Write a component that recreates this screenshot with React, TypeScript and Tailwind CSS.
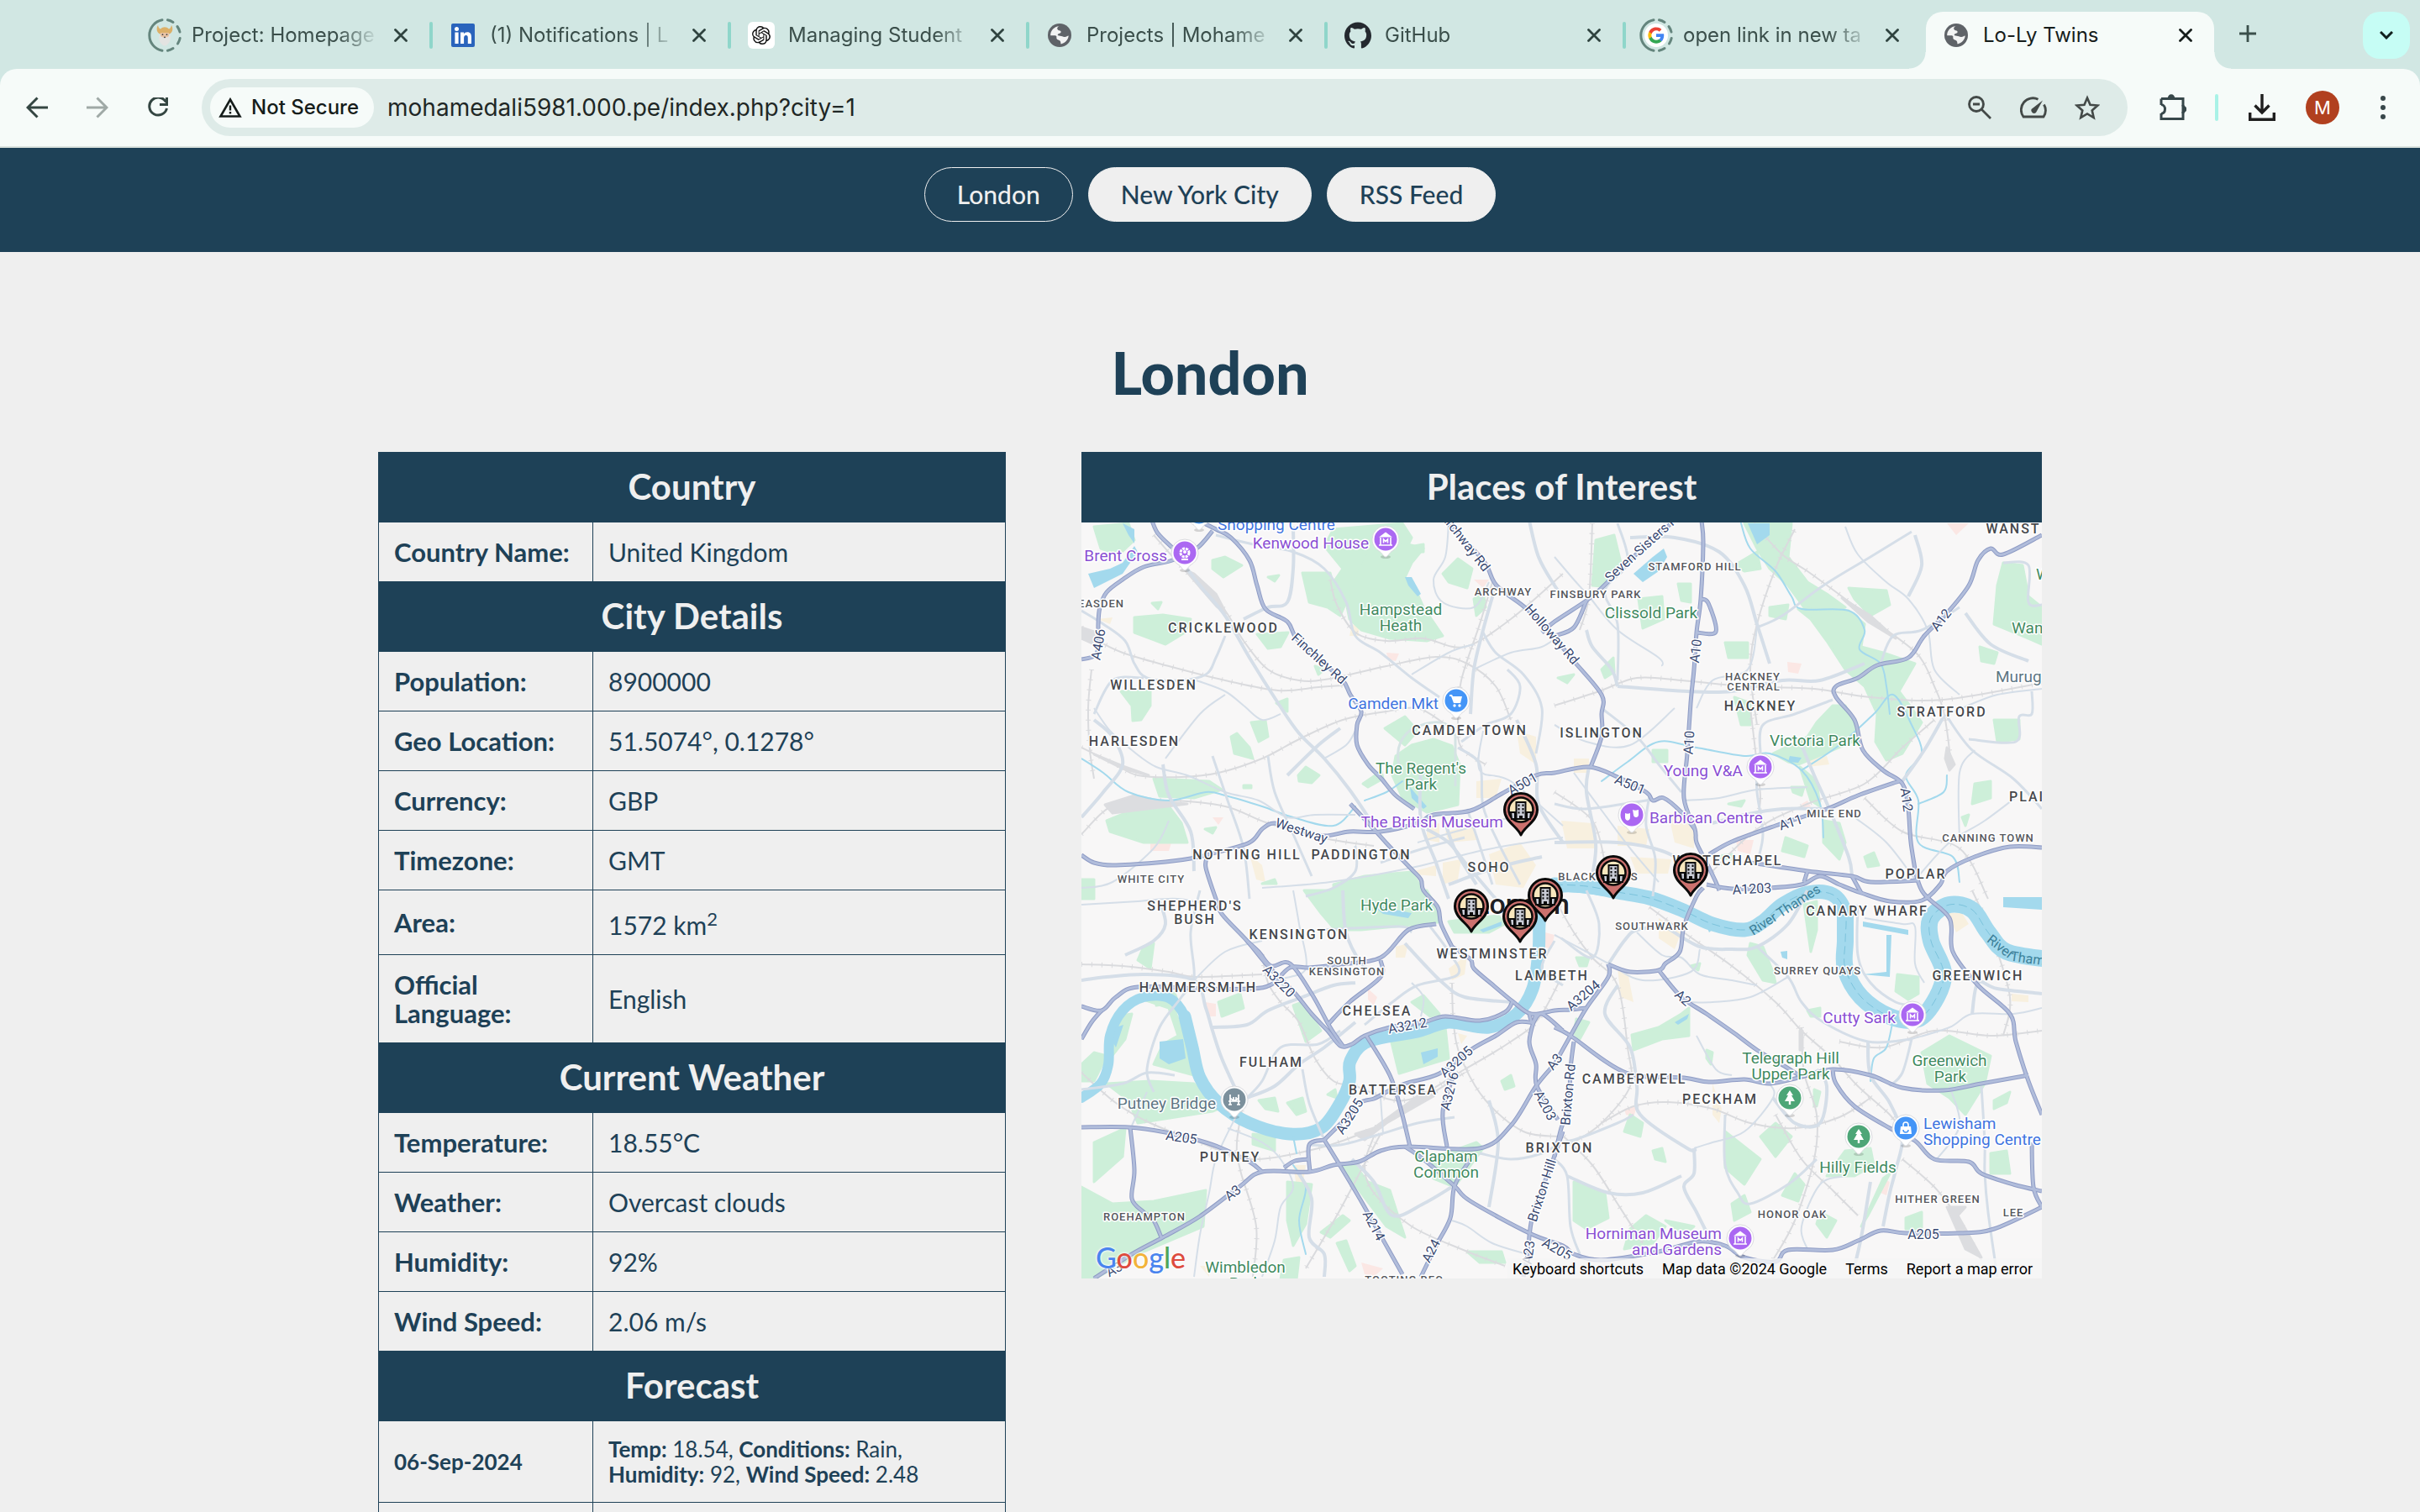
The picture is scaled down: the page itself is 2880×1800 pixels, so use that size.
import React from 'react'

/* ------------------------------------------------------------------ */
/* Browser chrome                                                      */
/* ------------------------------------------------------------------ */

function Globe() {
  return (
    <svg viewBox="0 0 28 28" className="size-7">
      <circle cx="14" cy="14" r="14" fill="#5f6368" />
      <path
        d="M13.500 3.200C11 4 10.600 6.300 12 7.600c1.300 1.200 3.800.7 3.600 2.600-.1 1.800-3.200 1.500-3.800 2.900-.5 1.200.9 1.700 2.800 1.700 2.200 0 3.300 1.400 5.600 1.200 2.200-.2 3.200-1.700 4.500-1.600-.3 4.700-3.900 8.600-9 10-.7-1.300 0-2.400-1.100-3.700-.9-1.100-3.400-1.100-4.100-2.700-.6-1.400.5-2.500-.6-3.300-1.600-1-4.600-.2-6.700-.4C2.900 8.600 7.400 3.600 13.500 3.200Z"
        fill="#fff"
        opacity="0.92"
      />
    </svg>
  )
}

function Ring({ children }: { children: React.ReactNode }) {
  return (
    <svg viewBox="0 0 40 40" className="size-10">
      <g fill="none" stroke="#64857d" strokeWidth="3" strokeLinecap="round">
        <path d="M17 1.800A18.500 18.500 0 0 0 17 38.200" />
        <path d="M23.500 1.800A18.500 18.500 0 0 1 30 4.500M35 9.500A18.500 18.500 0 0 1 38 16M38.200 23.500A18.500 18.500 0 0 1 35.500 30M30 35.500A18.500 18.500 0 0 1 23.500 38.200" />
      </g>
      {children}
    </svg>
  )
}

function Viking() {
  return (
    <Ring>
      <path d="M12 8c-2.500 4-1.500 9 2.500 10.500h11c4-1.500 5-6.500 2.500-10.500-.5 2.500-1.500 4-3 4.500-3-3-7-3-10 0-1.500-.5-2.500-2-3-4.500Z" fill="#dcb068" />
      <path d="M15 17h10v6H15z" fill="#e9c3a4" />
      <path d="M14 19c-2 4 0 10 2.500 11.500 1.500 2.600 5.500 2.600 7 0C26 29 28 23 26 19c-1 3-3 3.500-6 3.500S15 22 14 19Z" fill="#e3e3e1" />
      <circle cx="17.500" cy="19.200" r="0.9" fill="#444" />
      <circle cx="22.500" cy="19.200" r="0.9" fill="#444" />
      <circle cx="20" cy="22.300" r="0.9" fill="#333" />
    </Ring>
  )
}

function GoogleG() {
  return (
    <Ring>
      <circle cx="20" cy="20" r="14" fill="#fff" />
      <g transform="translate(9.500 9.500) scale(0.875)">
        <path fill="#4285F4" d="M22.560 12.250c0-.78-.07-1.530-.2-2.250H12v4.260h5.920a5.060 5.060 0 0 1-2.200 3.320v2.770h3.570c2.080-1.920 3.270-4.740 3.270-8.100Z" />
        <path fill="#34A853" d="M12 23c2.970 0 5.460-.98 7.280-2.660l-3.570-2.770c-.98.66-2.230 1.060-3.710 1.060-2.860 0-5.290-1.930-6.160-4.530H2.180v2.840A11 11 0 0 0 12 23Z" />
        <path fill="#FBBC05" d="M5.840 14.090a6.600 6.600 0 0 1 0-4.200V7.070H2.180a11 11 0 0 0 0 9.860l3.660-2.840Z" />
        <path fill="#EA4335" d="M12 5.380c1.620 0 3.060.56 4.210 1.640l3.150-3.150A11 11 0 0 0 2.180 7.070l3.660 2.840C6.710 7.310 9.140 5.380 12 5.380Z" />
      </g>
    </Ring>
  )
}

function LinkedIn() {
  return (
    <svg viewBox="0 0 28 28" className="size-7">
      <rect width="28" height="28" rx="2" fill="#2a64bc" />
      <g fill="#fff">
        <circle cx="6.500" cy="6.500" r="2.500" />
        <path d="M4.400 10.600h4.200V24H4.400zM11 10.600h4v1.900c.8-1.300 2.200-2.200 4.100-2.200 3.900 0 4.900 2.500 4.900 6.200V24h-4.200v-6.700c0-1.800-.2-3.400-2.200-3.400s-2.500 1.500-2.500 3.300V24H11z" />
      </g>
    </svg>
  )
}

function OpenAI() {
  return (
    <svg viewBox="0 0 32 32" className="size-8">
      <rect width="32" height="32" rx="6" fill="#fff" />
      <g transform="translate(5 5) scale(0.917)">
        <path
          fill="#111"
          d="M22.282 9.821a5.985 5.985 0 0 0-.516-4.910 6.046 6.046 0 0 0-6.510-2.900A6.065 6.065 0 0 0 4.981 4.182a5.985 5.985 0 0 0-3.998 2.900 6.046 6.046 0 0 0 .743 7.097 5.980 5.980 0 0 0 .510 4.911 6.051 6.051 0 0 0 6.515 2.900A5.985 5.985 0 0 0 13.260 24a6.056 6.056 0 0 0 5.772-4.206 5.990 5.990 0 0 0 3.997-2.900 6.056 6.056 0 0 0-.747-7.073zM13.260 22.430a4.476 4.476 0 0 1-2.876-1.040l.141-.081 4.779-2.758a.795.795 0 0 0 .392-.681v-6.737l2.020 1.168a.071.071 0 0 1 .038.052v5.583a4.504 4.504 0 0 1-4.494 4.494zM3.600 18.304a4.470 4.470 0 0 1-.535-3.014l.142.085 4.783 2.759a.771.771 0 0 0 .780 0l5.843-3.369v2.332a.080.080 0 0 1-.033.062L9.740 19.950a4.500 4.500 0 0 1-6.140-1.646zM2.340 7.896a4.485 4.485 0 0 1 2.366-1.973V11.600a.766.766 0 0 0 .388.676l5.815 3.355-2.020 1.168a.076.076 0 0 1-.071 0l-4.830-2.786A4.504 4.504 0 0 1 2.340 7.872zm16.597 3.855l-5.833-3.387L15.119 7.200a.076.076 0 0 1 .071 0l4.830 2.791a4.494 4.494 0 0 1-.676 8.105v-5.678a.790.790 0 0 0-.407-.667zm2.010-3.023l-.141-.085-4.774-2.782a.776.776 0 0 0-.785 0L9.409 9.230V6.897a.066.066 0 0 1 .028-.061l4.830-2.787a4.500 4.500 0 0 1 6.680 4.660zm-12.640 4.135l-2.020-1.164a.080.080 0 0 1-.038-.057V6.075a4.500 4.500 0 0 1 7.375-3.453l-.142.080L8.704 5.460a.795.795 0 0 0-.393.681zm1.097-2.365l2.602-1.500 2.607 1.500v2.999l-2.597 1.500-2.607-1.500z"
        />
      </g>
    </svg>
  )
}

function GitHub() {
  return (
    <svg viewBox="0 0 24 24" className="size-8">
      <path
        fill="#24292f"
        d="M12 .297c-6.630 0-12 5.373-12 12 0 5.303 3.438 9.800 8.205 11.385.6.113.82-.258.82-.577 0-.285-.010-1.040-.015-2.040-3.338.724-4.042-1.610-4.042-1.610C4.422 18.070 3.633 17.700 3.633 17.700c-1.087-.744.084-.729.084-.729 1.205.084 1.838 1.236 1.838 1.236 1.070 1.835 2.809 1.305 3.495.998.108-.776.417-1.305.760-1.605-2.665-.3-5.466-1.332-5.466-5.930 0-1.310.465-2.380 1.235-3.220-.135-.303-.540-1.523.105-3.176 0 0 1.005-.322 3.300 1.230.960-.267 1.980-.399 3-.405 1.020.006 2.040.138 3 .405 2.280-1.552 3.285-1.230 3.285-1.230.645 1.653.240 2.873.120 3.176.765.840 1.230 1.910 1.230 3.220 0 4.610-2.805 5.625-5.475 5.920.420.360.810 1.096.810 2.220 0 1.606-.015 2.896-.015 3.286 0 .315.210.690.825.570C20.565 22.092 24 17.592 24 12.297c0-6.627-5.373-12-12-12"
      />
    </svg>
  )
}

function Cross({ color }: { color: string }) {
  return (
    <svg viewBox="0 0 16 16" className="size-4">
      <path d="M1.500 1.500 14.500 14.500M14.500 1.500 1.500 14.500" stroke={color} strokeWidth="2.800" strokeLinecap="round" />
    </svg>
  )
}

const TABS = [
  { title: 'Project: Homepage', icon: <Viking /> },
  { title: '(1) Notifications | L', icon: <LinkedIn /> },
  { title: 'Managing Student', icon: <OpenAI /> },
  { title: 'Projects | Mohame', icon: <Globe /> },
  { title: 'GitHub', icon: <GitHub /> },
  { title: 'open link in new ta', icon: <GoogleG /> },
]

function TabBody({ title, icon, active }: { title: string; icon: React.ReactNode; active?: boolean }) {
  return (
    <>
      <span className="ml-4 flex w-10 shrink-0 justify-center">{icon}</span>
      <span
        className={
          active
            ? 'ml-3 min-w-0 flex-1 overflow-hidden whitespace-nowrap text-[#161d1b]'
            : 'ml-3 min-w-0 flex-1 overflow-hidden whitespace-nowrap text-[#3b4f4b] [mask-image:linear-gradient(to_right,black_78%,transparent)]'
        }
      >
        {title}
      </span>
      <button aria-label={'Close ' + title} className="mr-[18px] ml-2.5 flex size-8 shrink-0 items-center justify-center">
        <Cross color={active ? '#161d1b' : '#2f433f'} />
      </button>
    </>
  )
}

function TabStrip() {
  return (
    <div className="flex h-[82px] items-stretch bg-[#d1e7e3] pl-[160px] text-[24px] leading-[32px]">
      {TABS.map((t, i) => (
        <div key={t.title} className="flex max-w-[355px] flex-1 items-center pt-0.5">
          <TabBody title={t.title} icon={t.icon} />
          <span className={i < TABS.length - 1 ? 'h-8 w-1 rounded-full bg-[#8fd6ca]' : 'h-8 w-1'} />
        </div>
      ))}
      <div className="relative mt-[14px] ml-0.5 flex w-[343px] items-center rounded-t-[20px] bg-[#f6fbf9] pb-[12px]">
        <span className="absolute bottom-0 -left-5 size-5 bg-[radial-gradient(circle_at_0_0,#d1e7e3_19px,#f6fbf9_20px)]" />
        <span className="absolute -right-5 bottom-0 size-5 bg-[radial-gradient(circle_at_100%_0,#d1e7e3_19px,#f6fbf9_20px)]" />
        <TabBody title="Lo-Ly Twins" icon={<Globe />} active />
      </div>
      <button aria-label="New tab" className="ml-6 flex h-[80px] w-8 items-center justify-center">
        <svg viewBox="0 0 20 20" className="size-5">
          <path d="M10 0v20M0 10h20" stroke="#3b4f4b" strokeWidth="2.800" />
        </svg>
      </button>
      <button aria-label="Search tabs" className="mt-[14px] mr-3 ml-auto flex size-14 items-center justify-center rounded-[20px] bg-[#c6fdf5]">
        <svg viewBox="0 0 16 10" className="h-2.5 w-4" fill="none">
          <path d="M1 1l7 7 7-7" stroke="#10201d" strokeWidth="3" />
        </svg>
      </button>
    </div>
  )
}

function Toolbar() {
  return (
    <div className="bg-[#d1e7e3]">
      <div className="flex h-[94px] items-center rounded-t-[20px] border-b-2 border-[#dbe3df] bg-[#f6fbf9] pl-6 text-[#37474a]">
        <button aria-label="Back" className="flex size-10 items-center justify-center">
          <svg viewBox="0 0 26 26" className="size-[26px]" fill="none" stroke="#344642" strokeWidth="3">
            <path d="M26 13H2.500M13.500 1.500 2 13l11.500 11.500" />
          </svg>
        </button>
        <button aria-label="Forward" className="ml-8 flex size-10 items-center justify-center">
          <svg viewBox="0 0 26 26" className="size-[26px]" fill="none" stroke="#9fa9a6" strokeWidth="3">
            <path d="M0 13h23.500M12.500 1.500 24 13 12.500 24.500" />
          </svg>
        </button>
        <button aria-label="Reload" className="ml-8 flex size-10 items-center justify-center">
          <svg viewBox="0 0 24 24" className="size-6" fill="none" stroke="#344642" strokeWidth="3">
            <path d="M21.500 5.500A10.500 10.500 0 1 0 22.500 13" />
            <path d="M22.500 0v8.500H14" />
          </svg>
        </button>
        <div className="ml-8 flex h-[68px] min-w-0 flex-1 items-center rounded-full bg-[#deebe8] px-2.5">
          <button className="flex h-12 shrink-0 items-center gap-[11px] rounded-full bg-[#f6fbf9] pr-[18px] pl-2.5 text-[24px] font-medium text-[#161d1b]">
            <svg viewBox="0 0 28 24" className="h-6 w-7" fill="none" stroke="#161d1b">
              <path d="M14 2.500 25.500 22.500h-23Z" strokeWidth="2.600" />
              <path d="M14 9.500v6M14 17v2.600" strokeWidth="2.400" />
            </svg>
            Not Secure
          </button>
          <input
            aria-label="Address"
            className="ml-4 min-w-0 flex-1 bg-transparent text-[28px] text-[#1f2725] outline-none"
            defaultValue="mohamedali5981.000.pe/index.php?city=1"
          />
          <div className="flex items-center gap-6 pr-[18px]">
            <button aria-label="Zoom" className="flex size-10 items-center justify-center">
              <svg viewBox="0 0 28 28" className="size-7" fill="none" stroke="#434947" strokeWidth="2.800">
                <circle cx="10" cy="10" r="8.500" />
                <path d="M16 16l11 11M6 10h8" />
              </svg>
            </button>
            <button aria-label="Performance" className="flex size-10 items-center justify-center">
              <svg viewBox="0 0 32 26" className="h-[26px] w-8" fill="none" stroke="#434947" strokeWidth="2.800">
                <path d="M21.500 3.200A14 14 0 0 0 4 24h24a14 14 0 0 0 .5-14.500" />
                <path d="M27 4.500 19 19a3.500 3.500 0 0 1-5.500-4Z" fill="#434947" stroke="none" />
              </svg>
            </button>
            <button aria-label="Bookmark" className="flex size-10 items-center justify-center">
              <svg viewBox="0 0 30 30" className="size-[30px]" fill="none" stroke="#434947" strokeWidth="2.600">
                <path d="M15 3.500l3.500 8.200 8.900.8-6.700 5.900 2 8.700-7.700-4.600-7.700 4.600 2-8.700-6.700-5.900 8.900-.8Z" />
              </svg>
            </button>
          </div>
        </div>
        <button aria-label="Extensions" className="ml-8 flex size-11 items-center justify-center">
          <svg viewBox="0 0 32 34" className="h-[34px] w-8" fill="none" stroke="#37474a" strokeWidth="3">
            <path d="M2 6.500h26v9M28 22v8.500H2V24" />
            <path d="M2 14V6.500M2 13.500c6 .5 6 10 0 11M28 14v10" />
            <path d="M10.500 6a3.500 4 0 0 1 7 0ZM28 15.500a3.500 3.500 0 0 1 0 7Z" fill="#37474a" strokeWidth="1.500" />
          </svg>
        </button>
        <span className="ml-7 h-8 w-1 rounded-full bg-[#a9f2e7]" />
        <button aria-label="Downloads" className="ml-8 flex size-10 items-center justify-center">
          <svg viewBox="0 0 32 32" className="size-8" fill="none" stroke="#1f1f1f" strokeWidth="3.400">
            <path d="M16 0v22M7.500 13.500 16 22l8.500-8.500M1.700 22v8.300h28.600V22" />
          </svg>
        </button>
        <button aria-label="Profile" className="ml-8 flex size-10 items-center justify-center rounded-full bg-[#b1401f] text-[22px] text-white">
          M
        </button>
        <button aria-label="Menu" className="mr-6 ml-8 flex size-10 items-center justify-center">
          <svg viewBox="0 0 6 28" className="h-7 w-1.5" fill="#37474a">
            <circle cx="3" cy="3" r="3" />
            <circle cx="3" cy="14" r="3" />
            <circle cx="3" cy="25" r="3" />
          </svg>
        </button>
      </div>
    </div>
  )
}

/* ------------------------------------------------------------------ */
/* Map                                                                 */
/* ------------------------------------------------------------------ */

// The map is digitised in four tiles (a b / c d), each with its own grid.
const TILES: Record<string, [number, number, number]> = {
  a: [0.37, -7, -12],
  b: [0.3763, 563, -12],
  c: [0.37, -7, 438],
  d: [0.3763, 563, 438],
}

function project(tile: string, x: number, y: number): [number, number] {
  const [s, ox, oy] = TILES[tile]
  return [Math.round(x * s + ox), Math.round(y / 3 + oy)]
}

function trace(source: string): [number, number][] {
  let tile = 'a'
  const pts: [number, number][] = []
  for (const tok of source.trim().split(/\s+/)) {
    if (TILES[tok]) tile = tok
    else {
      const [x, y] = tok.split(',').map(Number)
      pts.push(project(tile, x, y))
    }
  }
  return pts
}

function smooth(source: string, k = 6) {
  const p = trace(source)
  let d = `M${p[0][0]} ${p[0][1]}`
  for (let i = 0; i < p.length - 1; i++) {
    const a = p[i - 1] ?? p[i]
    const b = p[i]
    const c = p[i + 1]
    const e = p[i + 2] ?? c
    d += `C${(b[0] + (c[0] - a[0]) / k).toFixed(1)} ${(b[1] + (c[1] - a[1]) / k).toFixed(1)} ${(c[0] - (e[0] - b[0]) / k).toFixed(1)} ${(c[1] - (e[1] - b[1]) / k).toFixed(1)} ${c[0]} ${c[1]}`
  }
  return d
}

function polygon(source: string) {
  return 'M' + trace(source).map((q) => q.join(' ')).join('L') + 'Z'
}

const PARKS = [
  'a 830,60 1050,40 1080,90 1060,140 940,150 900,240 870,330 830,250 860,200 800,120',
  'a 940,150 1060,110 1120,130 1080,180 1060,230 1100,290 1120,340 1180,440 1130,460 1010,450 920,420 880,380 870,320 900,230',
  'a 730,215 820,215 830,260 870,320 850,370 810,340 750,320',
  'a 190,375 280,365 370,380 350,430 290,470 190,430',
  'a 145,640 240,635 240,690 210,740 185,745 180,690',
  'a 585,435 685,430 660,480 620,485',
  'a 440,170 480,160 535,190 475,230 440,200',
  'a 60,50 170,40 190,100 140,150 80,130',
  'a 250,950 430,960 470,990 380,1020 270,1015',
  'a 100,1100 200,1055 300,1050 340,1110 360,1180 220,1180 110,1140',
  'a 1030,870 1080,830 1150,810 1210,835 1235,900 1230,1045 1130,1070 1050,1020 1020,940',
  'a 995,770 1060,730 1100,780 1060,830',
  'a 500,800 520,790 560,840 570,880 510,860',
  'a 565,750 610,745 620,800 590,820',
  'a 1180,220 1230,165 1275,200 1260,270 1200,250',
  'a 1280,310 1310,280 1320,340 1290,370',
  'a 715,940 740,910 785,940 760,965 720,960',
  'a 20,1310 60,1310 60,1380 20,1380',
  'a 830,1330 930,1300 1080,1285 1120,1350 1150,1400 830,1400',
  'a 620,230 655,225 640,245',
  'a 645,680 680,665 680,710',
  'a 770,550 800,560 780,580',
  'a 245,325 275,320 265,345',
  'a 415,1130 450,1125 440,1145',
  'a 540,975 565,975 565,985 540,985',
  'a 925,970 985,925 990,950 940,980',
  'a 1090,120 1120,115 1120,140 1095,140',
  'a 600,1325 640,1310 645,1325',
  'c 735,0 1130,0 1160,60 1165,115 920,140 835,140 790,80',
  'c 1200,110 1360,90 1380,120 1330,150 1220,150',
  'b 130,100 190,80 210,180 150,265 120,260',
  'b 265,310 340,300 345,380 280,415',
  'b 390,255 430,255 430,320 400,315',
  'b 600,40 750,40 740,160 800,250 860,290 920,340 870,360 790,340 740,260 680,200 640,130',
  'b 770,345 930,350 980,400 970,480 1040,500 1140,540 1090,640 1130,700 1160,750 1100,860 1050,885 1015,820 1020,720 980,620 920,560 860,460 810,380',
  'b 830,750 880,690 920,690 950,760 960,810 880,850 770,900 740,890 690,860 800,800',
  'b 540,465 610,465 610,520 550,520',
  'b 1420,180 1480,190 1500,300 1540,340 1540,470 1480,440 1390,400 1400,260',
  'b 1390,740 1470,740 1470,810 1400,820',
  'b 1330,970 1380,960 1380,1020 1320,1040',
  'b 930,270 1050,280 1060,330 1000,370 950,310',
  'b 850,1100 900,1110 920,1180 900,1240 850,1180',
  'b 775,910 830,960 840,1050 810,1030',
  'b 570,660 620,680 620,760 590,760',
  'b 680,340 740,330 730,380 680,370',
  'b 730,1160 800,1190 790,1230 720,1210',
  'b 500,1230 560,1220 560,1240',
  'b 980,1230 1010,1215 1025,1260 990,1265',
  'b 310,850 355,850 355,890 310,890',
  'b 1345,480 1400,500 1390,540 1350,530',
  'b 150,560 185,520 190,570 160,590',
  'b 10,590 60,580 40,610',
  'b 570,190 640,140 650,200 600,210',
  'b 750,980 790,980 780,1010 755,1000',
  'b 550,1040 600,1030 590,1050',
  'b 1290,1090 1310,1080 1300,1120',
  'c 130,450 180,440 160,530 110,600 110,510',
  'c 220,390 310,400 360,560 380,660 250,620 280,550 330,520 300,420',
  'c 20,1060 120,1120 250,1110 420,1070 410,1200 200,1300 60,1390 20,1390',
  'c 100,690 240,680 380,690 460,780 440,790 200,830 170,750',
  'c 260,370 320,365 330,400 260,410',
  'c 460,400 530,370 540,420 470,450',
  'c 700,410 730,400 790,500 740,540',
  'c 1010,520 1190,490 1200,600 1040,655',
  'c 680,1040 760,1050 740,1190 700,1270 680,1180',
  'c 850,980 890,970 940,1040 1010,1070 1060,1240 1000,1200',
  'c 1140,960 1290,900 1310,920 1220,1060 1150,1030',
  'c 20,620 60,580 100,590 60,680 20,680',
  'c 220,200 250,190 240,280 200,250',
  'c 590,750 640,740 650,790 610,780',
  'c 680,760 730,740 740,790 710,800',
  'c 790,1220 860,1160 880,1180 820,1240',
  'c 840,1260 870,1250 900,1340 880,1360',
  'c 570,870 640,880 640,930 570,905',
  'c 60,900 160,850 150,950 60,1040',
  'c 1260,1290 1370,1290 1380,1330 1300,1330',
  'c 1370,680 1400,660 1410,700 1380,710',
  'c 670,1320 720,1310 710,1390 660,1390',
  'c 1080,400 1120,375 1170,440 1140,450',
  'c 810,730 835,710 840,740',
  'd 245,515 330,490 400,440 425,420 425,520 340,530 250,570',
  'd 620,190 660,200 690,290 700,330 660,320 610,230',
  'd 790,50 830,40 830,140 810,220',
  'd 1085,300 1150,310 1150,370 1120,390 1080,360',
  'd 1160,580 1250,520 1380,590 1360,690 1300,800 1250,740 1180,690',
  'd 540,860 650,960 600,1050 540,990',
  'd 650,880 700,830 750,880 700,950',
  'd 760,1010 790,1050 770,1110 720,1090',
  'd 60,1040 160,1080 170,1170 100,1210 60,1180',
  'd 240,1210 290,1160 350,1200 310,1260 220,1280',
  'd 920,930 1000,920 1010,980 950,1020 860,1020',
  'd 1110,1170 1160,1150 1160,1210 1110,1210',
  'd 1380,940 1430,930 1440,1010 1380,1010',
  'd 240,800 280,830 270,880 220,860',
  'd 350,1180 440,1200 410,1230',
  'd 560,1120 600,1090 620,1150 570,1180',
  'd 840,1150 890,1180 860,1240 830,1190',
  'd 70,460 110,470 80,530 60,510',
  'd 800,430 840,420 840,450 810,450',
  'd 310,930 340,920 350,970 320,960',
  'd 1390,750 1440,720 1430,760 1390,780',
  'd 1040,1030 1060,1010 990,1160 970,1200',
  'd 70,240 110,240 100,270 80,270',
  'd 430,270 460,260 455,285',
  'd 480,570 500,580 495,620 480,600',
  'd 820,710 840,720 830,770 820,770',
]

const CREAM = [
  'a 1130,1120 1170,1110 1170,1180 1130,1170',
  'a 1420,780 1480,800 1480,900 1430,860',
  'a 1290,960 1370,950 1350,1020 1290,1020',
  'a 1190,1140 1280,1120 1290,1170 1200,1180',
  'a 1330,1220 1430,1180 1480,1260 1440,1340 1350,1330',
  'a 1180,1250 1240,1240 1230,1310 1180,1330',
  'a 1060,1290 1160,1260 1160,1300',
  'a 560,1220 600,1260 610,1320 580,1310',
  'a 890,400 910,410 910,440 880,440',
  'a 70,380 120,375 110,400',
  'b 20,1100 120,1110 130,1200 40,1200',
  'b 360,1070 440,1090 440,1200 380,1180',
  'b 200,1120 300,1130 290,1190 200,1190',
  'b 240,1230 370,1240 360,1290 260,1290',
  'b 400,1240 470,1260 460,1330 400,1310',
  'b 60,880 110,880 110,930 60,930',
  'b 800,880 860,870 870,900 800,910',
  'b 430,1080 460,1080 450,1110',
  'c 400,1340 430,1340 430,1380',
  'c 1030,200 1070,190 1060,240 1030,240',
  'c 1200,280 1260,230 1250,300 1210,320',
  'c 700,980 740,980 730,1060 710,1060',
  'c 1230,510 1260,520 1240,550',
  'd 200,280 230,290 250,400 210,380',
  'd 330,100 400,150 380,210 330,170',
  'd 1240,80 1290,80 1310,120 1270,150',
  'd 500,690 530,780 520,830 500,800',
  'd 1445,370 1500,375 1500,400 1445,395',
]

const PINK = [
  'a 1000,500 1040,505 1030,530 1005,525',
  'a 1280,240 1330,240 1310,270',
  'a 240,1180 310,1170 300,1210 240,1210',
  'a 440,1090 475,1090 460,1115',
  'b 735,535 780,540 770,575 740,570',
  'b 1240,40 1310,40 1270,80',
  'b 575,1170 630,1170 620,1220 580,1210',
  'b 780,1040 800,1030 810,1050 790,1060',
  'c 415,400 450,405 450,450 430,450',
  'c 940,350 970,380 960,410 940,390',
  'c 1510,150 1540,160 1530,210 1505,200',
  'c 920,1330 990,1350 960,1380 930,1370',
  'd 220,780 260,770 250,810 225,800',
  'd 1040,1030 1060,1040 1050,1090 1030,1080',
]

const RAIL = [
  'a 20,410 60,450 150,500 300,550 480,600 650,635 780,625 860,618',
  'a 250,80 330,180 400,260 480,350 540,460 620,560 720,600 820,595 1000,550 1160,515 1260,540 1350,620 1400,740',
  'a 20,1150 130,1040 300,1030 480,1050 620,1110 800,1165 960,1190',
  'a 20,840 130,900 200,940 340,945 460,930 600,880 720,810 860,740 1000,710 1100,700 1180,750',
  'a 820,240 840,330 900,430 1000,460 1120,450 1250,480 1400,380 1568,220',
  'a 50,560 40,700 45,850 60,950',
  'a 1320,900 1240,840 1230,740 1240,600 1300,400 1340,250',
  'b 120,40 110,300 80,420',
  'b 0,690 140,640 260,590 400,600 600,620 820,630 1000,660 1230,670 1540,610',
  'b 630,40 720,150 800,210 920,310 1040,410 1150,510 1200,620 1230,710 1250,850 1250,900',
  'b 620,700 640,900 650,1020 640,1100',
  'b 500,1280 640,1130 800,1040 980,970 1100,840 1200,740',
  'b 640,760 620,560 640,400 700,200 760,60',
  'b 980,1020 1100,1140 1280,1200 1370,1380',
  'b 0,1000 120,1100 160,1250',
  'c 20,265 150,270 300,290 390,310 600,300',
  'c 600,230 620,330 660,400 720,470 770,600 830,680 900,700 1060,750 1250,640 1400,540 1490,460 1568,300',
  'c 20,650 130,760 240,830 400,900 560,960 780,920 960,850 1080,770 1250,650',
  'c 1210,330 1215,480 1240,600 1320,750 1440,860 1568,880',
  'c 960,880 930,980 960,1080 1080,1200 1240,1280 1380,1340',
  'c 540,750 520,900 530,1000 580,1200 570,1380',
  'c 980,870 920,1000 840,1160 740,1350',
  'd 0,30 60,150 120,240 200,340 230,560 240,700 150,830 60,900',
  'd 300,60 420,160 560,270 700,400 780,500 880,600 960,700 1060,800 1100,860',
  'd 780,490 790,650 830,800 820,960 760,1180 690,1320',
  'd 150,830 250,770 360,755 500,780 620,830 760,850 900,810 1000,740',
  'd 700,800 780,960 880,1070 960,1160',
  'd 1100,960 1200,1060 1270,1160 1350,1320',
  'd 900,540 1040,560 1200,500 1380,520 1540,500',
  'd 30,880 120,980 200,1120 280,1260',
  'd 1320,0 1380,150 1440,380 1420,520',
]

const MINOR = [
  'a 310,130 400,260 480,370 560,520 650,680 720,790 800,880 880,990 960,1120',
  'a 20,350 90,400 160,460 190,540 230,590 330,600 420,580 450,520 480,440',
  'a 390,600 480,640 540,690 600,740 660,720',
  'a 700,50 700,200 680,320 620,340 540,380',
  'a 450,80 560,110 700,140 800,200 870,320 900,440 980,500 1080,590 1170,660',
  'a 1200,40 1190,160 1150,240 1180,320 1280,340 1330,250',
  'a 1350,260 1310,420 1280,560 1270,720',
  'a 60,720 120,600 220,590',
  'a 60,700 110,780 180,850 260,910 360,940 480,1000 590,1030 680,1090 770,1080 900,1080',
  'a 20,1090 90,1000 150,900 120,800 60,740',
  'a 440,870 490,1030 540,1200 560,1380',
  'a 20,1340 120,1320 250,1200 300,1100',
  'a 280,900 300,1010 370,1140 380,1280',
  'a 620,870 640,1000 700,1150 760,1300',
  'a 800,880 870,830 900,780',
  'a 680,940 780,830 850,770',
  'a 900,1190 900,1280 830,1340 740,1370',
  'a 600,1340 820,1320 1080,1270 1300,1210 1450,1180 1568,1160',
  'a 1110,900 1110,1100 1160,1250 1200,1380',
  'a 1230,840 1300,900 1310,1050 1360,1180 1430,1330',
  'a 1310,780 1300,920 1400,960 1568,1120',
  'a 1420,740 1480,900 1490,1040 1568,1180',
  'a 1390,560 1430,620 1400,720 1320,760 1240,820',
  'a 1280,560 1400,500 1500,480 1568,430',
  'a 1460,30 1490,160 1540,260 1568,300',
  'a 1310,430 1350,500 1440,580 1500,700 1480,860',
  'a 1080,580 1200,500 1280,470',
  'a 1130,1130 1200,1180 1260,1260 1350,1380',
  'a 980,1250 1120,1200 1250,1160',
  'a 290,880 400,720 480,650',
  'a 1180,1080 1220,1200 1290,1330',
  'a 1260,1060 1300,1190 1340,1330',
  'a 1100,1180 1250,1130 1400,1090 1500,1060',
  'a 1200,1330 1350,1270 1500,1230',
  'b 200,40 230,180 160,280 200,400 200,600',
  'b 0,160 60,240 110,300 200,420 330,520 340,550',
  'b 240,90 380,90 520,140 600,260 640,400 680,540',
  'b 640,410 720,370 850,260 1000,160 1130,70',
  'b 640,410 610,560 500,600 450,700',
  'b 200,620 420,640 560,640 720,600 840,600 980,540',
  'b 880,670 760,720 660,760 650,860',
  'b 920,50 960,150 1050,250 1120,310 1180,420 1200,560 1280,650',
  'b 1120,300 1160,190 1140,80',
  'b 1030,540 1070,440 1160,420 1280,340',
  'b 1230,730 1290,700 1400,650 1540,630',
  'b 1230,730 1170,850 1100,960',
  'b 1240,730 1320,850 1450,950 1540,1060',
  'b 1330,850 1280,930 1280,1180',
  'b 780,830 820,940 870,1060 930,1230 940,1300',
  'b 640,900 640,1000 660,1150 640,1250',
  'b 410,1030 520,1020 640,990 800,980',
  'b 200,620 180,560 120,480 100,420',
  'b 150,700 260,800 330,900 400,1000',
  'b 0,760 100,820 240,830 380,700',
  'b 110,910 100,1000 130,1180 120,1300',
  'b 0,1040 90,1060 220,1040 340,1020',
  'b 60,930 160,1080 240,1200 330,1320',
  'b 0,1180 200,1180 340,1210 480,1290',
  'b 300,1010 290,1120 320,1240 310,1370',
  'b 1150,1300 1250,1180 1360,1100 1480,1000',
  'b 1300,360 1380,470 1500,530',
  'b 1420,180 1500,190 1500,320 1540,330',
  'b 950,1090 1050,1180 1140,1310',
  'b 500,1110 600,1080 720,1060 860,1060',
  'b 1310,810 1460,820 1470,730 1510,720 1510,640',
  'c 20,50 200,40 330,30 460,60',
  'c 20,320 100,310 230,300 380,320 420,420 440,500 470,600 520,720',
  'c 400,0 370,150 380,310 340,380 270,490 230,640 250,720',
  'c 380,320 480,220 600,180',
  'c 440,490 550,480 620,430 730,380 830,340 900,330',
  'c 550,740 600,680 660,560 780,550 850,500',
  'c 550,740 510,820 450,960 430,1080 400,1230 380,1380',
  'c 550,740 640,700 720,620 800,560 900,470',
  'c 730,640 750,760 800,890',
  'c 700,370 660,320 740,280 720,120 700,0',
  'c 860,0 870,150 920,260 960,290',
  'c 790,140 1040,130 1080,150',
  'c 1080,330 1120,380 1110,450',
  'c 1060,190 1120,260 1180,330 1250,380 1400,400',
  'c 1140,130 1200,220 1230,300 1100,340 1020,400 930,480',
  'c 490,850 600,900 660,960 700,1060 660,1130 640,1250 600,1380',
  'c 710,1000 760,1100 750,1240 800,1300 800,1380',
  'c 750,910 850,910 980,870 1100,830 1220,810',
  'c 980,740 990,870',
  'c 890,960 960,1040 1020,1160 1120,1120 1210,1060',
  'c 1300,940 1400,960 1500,940 1560,900',
  'c 1210,1180 1260,1200 1340,1260 1450,1300',
  'c 1330,750 1360,900 1330,1130',
  'c 20,710 150,690 230,650 320,660',
  'c 180,840 230,720',
  'c 160,230 250,180 290,120 270,40',
  'c 1540,180 1500,280 1568,340',
  'd 0,160 100,220 170,260 280,320 430,290 460,210',
  'd 170,265 220,180 260,140 350,130',
  'd 100,0 140,120 120,240 20,170',
  'd 260,150 340,230 400,240 460,300 560,320 640,340',
  'd 350,130 460,200 560,210 640,200 740,120 800,0',
  'd 640,200 740,310 780,400 850,470 990,540 1130,530',
  'd 740,310 620,380 500,400 430,400',
  'd 200,340 160,440 240,560 260,700 270,800 420,920 450,920',
  'd 250,800 200,830 60,890 0,900',
  'd 440,920 500,900 600,860 690,740 680,690',
  'd 440,920 440,1010 410,1060 450,1150 490,1240',
  'd 540,800 540,980 580,1080 620,1120 740,1050 830,960',
  'd 450,520 510,640 560,660',
  'd 690,740 760,830 840,830 860,700 830,640',
  'd 960,50 960,230 1000,330 1080,400 1150,410',
  'd 980,100 1100,120 1140,130 1140,260 1170,330',
  'd 990,540 1000,660 1060,760 1100,880 1080,1000 1060,1080 1040,1200',
  'd 1130,530 1100,650 1060,700',
  'd 1130,530 1250,490 1320,440 1450,440 1540,420',
  'd 1320,440 1340,330 1400,350 1540,370',
  'd 1350,700 1360,900 1360,1010 1370,1150 1400,1380',
  'd 1250,700 1280,840 1210,960',
  'd 40,1020 170,1080 280,1080 400,1020',
  'd 0,960 40,1020 50,1200 80,1300',
  'd 800,1280 780,1200 840,1050 920,1020',
  'd 1000,1040 970,1240 940,1380',
]

const MAJOR = [
  'a 245,30 265,75 310,125',
  'a 20,525 60,512 72,480 72,400 78,340 100,285 150,240 220,195 310,170 390,130 440,65',
  'a 380,20 450,60 500,90 560,170 585,260 610,345 680,390 710,450 790,530 860,600 885,650 920,710 905,760 905,830 940,900 985,950 1030,1010 1090,1060',
  'a 1190,30 1310,170 1355,260 1450,345 b 0,450 60,530 150,650 150,720 150,800 115,910',
  'b 370,40 250,160 150,270 100,315 0,390 -40,430',
  'b 100,315 60,410 0,440',
  'b 465,30 470,110 462,310 450,430 440,560 430,680 420,860 410,1020 445,1130 450,1180 480,1250 510,1320 520,1350',
  'b 462,310 485,325 510,425 450,430',
  'a 20,1225 60,1250 120,1260 260,1250 370,1235 450,1215 560,1180 600,1130 640,1110 720,1135 800,1155 880,1140 980,1140 1100,1110 1150,1080 1270,1065 1370,1005 1480,940 b 0,930 110,910 200,945 290,1000 310,1030 345,1020 400,1070 445,1130',
  'a 885,1040 960,1130 1010,1195 1080,1275 1110,1310 c 1120,0 1165,60 1175,120 1210,200',
  'a 425,1230 420,1270 450,1380 c 470,85 550,180 620,270 700,360 760,440 810,500 850,555 890,550 930,520 1010,490 1120,470 1190,450 1300,465 1380,435 1405,395',
  'c 20,415 85,430 130,380 200,345 400,352 560,350 630,335 690,275 750,275 850,265 980,240 1070,140 1160,120',
  'c 550,180 590,220 630,270 690,260 760,370 820,490 860,555',
  'c 20,530 50,470 85,430',
  'c 980,250 980,310 880,400 810,480',
  'c 1210,200 1270,245 1280,280 1340,335 1405,395 1465,440 d 0,430 50,425 100,420',
  'd 0,620 c 1480,700 1400,840 1300,920 1070,915 980,930 910,970 830,980 750,1005 600,1005 530,1055 400,1165 280,1240 180,1300 60,1385',
  'c 20,845 170,845 290,865 400,895 470,920 560,970 600,1005',
  'c 175,845 188,1000 180,1100 220,1150 250,1180 275,1240',
  'c 800,890 880,800 920,755 960,745 1000,720 1060,690 1170,655 1270,570 1350,520 1420,470 1475,475',
  'c 935,520 1010,660 1045,780 1075,915',
  'c 1220,650 1180,790 1195,915',
  'c 800,890 750,910 755,1005',
  'c 670,990 705,965 750,960',
  'c 800,890 860,1000 930,1130 1050,1370',
  'c 1270,960 1220,1055 1205,1170 1160,1270 1110,1380',
  'c 1060,915 1120,960 1220,1055 1270,1110 1460,1225 1568,1270 d 60,1300 150,1320 330,1290 455,1255 540,1270 600,1310 700,1325 740,1285 880,1285 960,1250 1030,1215 1110,1225 1280,1225 1390,1210 1540,1130',
  'c 1480,440 1460,540 1480,620 1485,700 1550,820',
  'c 1568,860 1530,980 1470,1160 1455,1300 1440,1380',
  'd 170,265 240,290 330,285 350,260 395,220 410,130 450,20 b 470,1340',
  'd 330,285 400,380 480,440 570,510 640,570 730,630 780,665',
  'd 170,265 170,310 100,420 50,520 0,620',
  'd 0,490 50,520 225,650 410,670 490,685 600,675 680,690 780,665 880,640 1000,660 1100,705 1230,715 1350,690 1500,660',
  'd 60,540 50,640 45,780 20,850 0,950',
  'd 880,640 890,690 950,770 1060,850 1140,895 1200,960 1310,970 1350,1010 1450,1050 1540,1075',
  'b 1540,80 1420,150 1380,130 1340,170 1310,260 1240,360 1170,440 1120,520 1020,545 960,590 890,620 890,660 950,740 975,850 1040,920 1100,970 1120,1060 1130,1200 1160,1350 d 1250,100 1260,220 1340,340 1440,440 1460,540 1500,680 1540,800',
  'b 490,1220 560,1175 700,1120 860,1060 960,1010 1090,960',
  'b 620,1250 800,1280 940,1300 1000,1320 1150,1315',
  'b 480,1330 560,1345 680,1340 780,1330 840,1300 900,1330 970,1360 d 1060,40 1160,35 1220,-20 b 1240,1280 1330,1230 1440,1195 1540,1198',
  'b 940,1300 970,1360',
  'b 800,1280 790,1320',
  'd 1510,900 1515,1060 1540,1130',
  'c 1460,440 1470,470 1500,440 1568,500',
]

const THAMES_WEST =
  'c 20,740 80,690 105,620 110,520 150,430 220,380 300,385 350,450 375,560 400,670 460,760 560,830 690,870 790,850 850,760 880,680 885,610 940,540 1100,505 1200,470 1330,490 1420,440 1470,350 1490,220 1492,120 1500,20 1560,-8 d 80,-10 200,10 300,25'
const THAMES_EAST =
  'd 0,-20 100,-15 200,5 300,28 400,70 500,120 600,140 660,110 720,50 800,10 880,15 920,80 920,180 920,280 970,380 1060,450 1150,460 1210,380 1230,290 1190,180 1190,100 1250,50 1320,70 1370,150 1430,220 1560,245'

const STREAMS = [
  'b 590,40 620,130 700,210 750,300 780,345 930,350 980,420 965,490 1030,540 1050,620 1060,720',
  'b 150,960 230,890 330,820 450,840 600,870 680,860 780,920 840,1040 850,1160',
  'b 780,920 900,830 1010,720 1070,650 1130,760 1160,860 1110,940 1150,1030 1150,1180 1260,1230 1280,1320',
  'b 1240,940 1230,1000 1150,1040',
  'a 20,880 90,930 170,1000 300,1030 420,1000 480,1010 600,1050 700,1090 830,1120 900,1050',
  'a 930,1030 1000,1000 1050,960',
  'c 700,880 710,940',
  'c 700,980 740,1060 720,1180 740,1300',
  'd 1070,460 1050,560 1010,600 1000,680',
]

const WATER = [
  'a 40,220 110,200 150,180 190,120 200,140 150,220 60,270',
  'a 150,40 190,60 190,110 170,80',
  'a 1060,230 1080,230 1110,290 1100,300 1070,260',
  'a 1075,980 1130,1050 1120,1060 1080,1020',
  'b 310,160 345,130 355,160 330,210 280,250 250,220',
  'b 610,40 680,40 680,80 640,115',
  'b 745,870 780,875 770,895 740,890',
  'c 270,540 345,530 355,600 300,620 270,600',
  'c 130,490 155,480 130,560 120,540',
  'c 950,50 1080,80 1070,100 990,85',
  'c 1110,580 1165,565 1165,595 1120,620',
  'c 1300,140 1370,110 1370,125 1310,150',
  'd 975,110 1120,140 1120,160 975,130',
  'd 1050,160 1065,160 1060,310 975,300 1050,290',
  'd 1420,25 1540,25 1540,70 1420,60',
  'd 380,470 425,440 420,460 390,480',
  'd 480,130 510,100 520,120 490,150',
  'd 715,220 735,215 735,245 720,240',
]

type Kind = 'area' | 'small' | 'park' | 'poi' | 'shop' | 'grey' | 'road' | 'river' | 'city'
type Anchor = 'start' | 'middle' | 'end'
type Label = [string, string, number, number, Kind, number?, Anchor?]

const LABELS: Label[] = [
  ['EASDEN', 'a', 157, 325, 'small', 0, 'end'],
  ['CRICKLEWOOD', 'a', 475, 412, 'area'],
  ['WILLESDEN', 'a', 252, 614, 'area'],
  ['HARLESDEN', 'a', 190, 815, 'area'],
  ['NOTTING HILL', 'a', 552, 1221, 'area'],
  ['PADDINGTON', 'a', 920, 1221, 'area'],
  ['WHITE CITY', 'a', 243, 1307, 'small'],
  ['SOHO', 'a', 1330, 1266, 'area'],
  ['ARCHWAY', 'a', 1375, 282, 'small'],
  ['CAMDEN TOWN', 'a', 1267, 778, 'area'],
  ['Hampstead', 'a', 1047, 346, 'park'],
  ['Heath', 'a', 1047, 403, 'park'],
  ["The Regent's", 'a', 1112, 912, 'park'],
  ['Park', 'a', 1112, 970, 'park'],
  ['Brent Cross', 'a', 295, 153, 'poi', 0, 'end'],
  ['Kenwood House', 'a', 942, 107, 'poi', 0, 'end'],
  ['The British Museum', 'a', 1375, 1103, 'poi', 0, 'end'],
  ['Shopping Centre', 'a', 645, 42, 'shop'],
  ['Camden Mkt', 'a', 1168, 682, 'shop', 0, 'end'],
  ['A406', 'a', 73, 472, 'road', -80],
  ['Finchley Rd', 'a', 783, 522, 'road', 42],
  ['Westway', 'a', 728, 1137, 'road', 18],
  ['Archway Rd', 'a', 1255, 105, 'road', 52],
  ['A501', 'a', 1438, 970, 'road', -30],
  ['Holloway Rd', 'b', -8, 435, 'road', 49],
  ['Seven Sisters R', 'b', 275, 130, 'road', -42],
  ['FINSBURY PARK', 'b', 130, 290, 'small'],
  ['STAMFORD HILL', 'b', 443, 192, 'small'],
  ['WANST', 'b', 1452, 56, 'area'],
  ['Clissold Park', 'b', 305, 357, 'park'],
  ['Wan', 'b', 1445, 410, 'park', 0, 'start'],
  ['W', 'b', 1524, 220, 'park', 0, 'start'],
  ['Murug', 'b', 1395, 584, 'grey', 0, 'start'],
  ['HACKNEY', 'b', 628, 584, 'small'],
  ['CENTRAL', 'b', 630, 621, 'small'],
  ['HACKNEY', 'b', 652, 691, 'area'],
  ['STRATFORD', 'b', 1225, 711, 'area'],
  ['ISLINGTON', 'b', 148, 787, 'area'],
  ['Victoria Park', 'b', 823, 812, 'park'],
  ['Young V&A', 'b', 595, 920, 'poi', 0, 'end'],
  ['Barbican Centre', 'b', 300, 1088, 'poi', 0, 'start'],
  ['PLAI', 'b', 1438, 1015, 'area', 0, 'start'],
  ['MILE END', 'b', 886, 1075, 'small'],
  ['CANNING TOWN', 'b', 1372, 1162, 'small'],
  ['WHITECHAPEL', 'b', 547, 1243, 'area'],
  ['POPLAR', 'b', 1143, 1291, 'area'],
  ['BLACKFRIARS', 'b', 138, 1298, 'small'],
  ['A10', 'b', 446, 494, 'road', -83],
  ['A10', 'b', 424, 822, 'road', -86],
  ['A12', 'b', 1223, 385, 'road', -52],
  ['A12', 'b', 1113, 1027, 'road', 82],
  ['A11', 'b', 747, 1108, 'road', -18],
  ['A501', 'b', 240, 973, 'road', 22],
  ['A1203', 'b', 625, 1343, 'road', -3],
  ["SHEPHERD'S", 'c', 383, 53, 'area'],
  ['BUSH', 'c', 383, 103, 'area'],
  ['KENSINGTON', 'c', 720, 157, 'area'],
  ['SOUTH', 'c', 874, 249, 'small'],
  ['KENSINGTON', 'c', 873, 287, 'small'],
  ['HAMMERSMITH', 'c', 394, 345, 'area'],
  ['Hyde Park', 'c', 1033, 50, 'park'],
  ['WESTMINSTER', 'c', 1340, 225, 'area'],
  ['LAMBETH', 'd', -9, 302, 'area'],
  ['CHELSEA', 'c', 970, 428, 'area'],
  ['FULHAM', 'c', 630, 612, 'area'],
  ['BATTERSEA', 'c', 1021, 711, 'area'],
  ['PUTNEY', 'c', 497, 950, 'area'],
  ['ROEHAMPTON', 'c', 221, 1164, 'small'],
  ['TOOTING BEC', 'c', 1057, 1388, 'small'],
  ['BRIXTON', 'c', 1557, 918, 'area'],
  ['Putney Bridge', 'c', 452, 758, 'grey', 0, 'end'],
  ['Clapham', 'c', 1193, 948, 'park'],
  ['Common', 'c', 1193, 1005, 'park'],
  ['Wimbledon', 'c', 547, 1345, 'park'],
  ['Park', 'c', 547, 1402, 'park'],
  ['A3220', 'c', 653, 325, 'road', 45],
  ['A3212', 'c', 1068, 482, 'road', -10],
  ['A3205', 'c', 1223, 612, 'road', -42],
  ['A3205', 'c', 880, 808, 'road', -58],
  ['A3216', 'c', 1202, 718, 'road', -76],
  ['A205', 'c', 341, 881, 'road', 8],
  ['A3', 'c', 505, 1080, 'road', -38],
  ['A3', 'c', 123, 1352, 'road', -28],
  ['A3', 'c', 1540, 612, 'road', -52],
  ['A203', 'c', 1512, 767, 'road', 62],
  ['A214', 'c', 960, 1197, 'road', 62],
  ['A24', 'c', 1143, 1286, 'road', -62],
  ['A23', 'c', 1457, 1293, 'road', -82],
  ['Brixton Hill', 'c', 1500, 1070, 'road', -72],
  ['A205', 'd', 8, 1280, 'road', 30],
  ['SOUTHWARK', 'd', 308, 125, 'small'],
  ['CANARY WHARF', 'd', 988, 73, 'area'],
  ['SURREY QUAYS', 'd', 832, 284, 'small'],
  ['GREENWICH', 'd', 1340, 304, 'area'],
  ['CAMBERWELL', 'd', 253, 673, 'area'],
  ['PECKHAM', 'd', 523, 745, 'area'],
  ['HONOR OAK', 'd', 752, 1154, 'small'],
  ['HITHER GREEN', 'd', 1211, 1102, 'small'],
  ['LEE', 'd', 1452, 1148, 'small'],
  ['Telegraph Hill', 'd', 746, 596, 'park'],
  ['Upper Park', 'd', 746, 654, 'park'],
  ['Greenwich', 'd', 1250, 605, 'park'],
  ['Park', 'd', 1252, 662, 'park'],
  ['Hilly Fields', 'd', 960, 988, 'park'],
  ['Cutty Sark', 'd', 1080, 452, 'poi', 0, 'end'],
  ['Horniman Museum', 'd', 530, 1224, 'poi', 0, 'end'],
  ['and Gardens', 'd', 530, 1282, 'poi', 0, 'end'],
  ['Lewisham', 'd', 1166, 830, 'shop', 0, 'start'],
  ['Shopping Centre', 'd', 1166, 888, 'shop', 0, 'start'],
  ['A3204', 'd', 90, 375, 'road', -40],
  ['A2', 'd', 407, 385, 'road', 42],
  ['Brixton Rd', 'd', 43, 728, 'road', -85],
  ['A205', 'd', 1166, 1228, 'road', 0],
  ['River Thames', 'd', 728, 70, 'river', -33],
  ['River', 'd', 1411, 202, 'river', 38],
  ['Tham', 'd', 1496, 243, 'river', 8],
  ['London', 'c', 1434, 48, 'city'],
]

const KIND: Record<Kind, string> = {
  area: 'fill-[#46484c] text-[16px] font-medium tracking-[2px]',
  small: 'fill-[#55575c] text-[13px] font-medium tracking-[1px]',
  park: 'fill-[#3f8a5f] text-[19px]',
  poi: 'fill-[#8a4fd3] text-[19px]',
  shop: 'fill-[#3f74e0] text-[19px]',
  grey: 'fill-[#5d7683] text-[19px]',
  road: 'fill-[#3a4a72] text-[16px]',
  river: 'fill-[#3c8099] text-[16px]',
  city: 'fill-[#202124] text-[34px] font-medium',
}

function Pin({ x, y, color, glyph }: { x: number; y: number; color: string; glyph: string }) {
  return (
    <g transform={`translate(${x} ${y})`}>
      <ellipse cx="0" cy="21" rx="6" ry="2" fill="#000" opacity="0.15" />
      <path d="M0 21C-2 21-4 17-7 14.500-12 11.500-16 7-16 0a16 16 0 0 1 32 0C16 7 12 11.500 7 14.500 4 17 2 21 0 21Z" fill="#fff" stroke="#d9dade" strokeWidth="1" />
      <circle r="13.500" fill={color} />
      {glyph === 'museum' && (
        <g fill="none" stroke="#fff" strokeWidth="1.600">
          <path d="M-8-2.500 0-8.500 8-2.500Z" fill="#fff" stroke="none" />
          <path d="M-6-2V6.500M6-2V6.500M-8 7H8M-2.500 4.500V0L0 2.500 2.500 0v4.500" />
        </g>
      )}
      {glyph === 'flower' && (
        <g>
          <circle r="5" fill="none" stroke="#fff" strokeWidth="3" strokeDasharray="3 1" />
          <circle cy="-1" r="2" fill="#fff" />
          <path d="M-4 8h8" stroke="#fff" strokeWidth="2" />
        </g>
      )}
      {glyph === 'mask' && (
        <path d="M-8-2c2 1 4 1 6 0v5c0 5-6 5-6 0ZM1-6c2 1 4 1 7 0v6c0 4-6 4-6 0Z" fill="#fff" />
      )}
      {glyph === 'cart' && (
        <g fill="#fff">
          <path d="M-8-7h3l1 2H7L5 3H-3L-6-5h-2Z" />
          <circle cx="-2" cy="6" r="1.700" />
          <circle cx="4" cy="6" r="1.700" />
        </g>
      )}
      {glyph === 'bag' && (
        <g>
          <path d="M-6-2H6L7 7H-7Z" fill="#fff" />
          <path d="M-3-2v-2a3 3 0 0 1 6 0v2" fill="none" stroke="#fff" strokeWidth="1.600" />
          <path d="M-3 2a3 3 0 0 0 6 0" fill="none" stroke={color} strokeWidth="1.500" />
        </g>
      )}
      {glyph === 'tree' && <path d="M0-9 4-3H2L6 4H1.200V8h-2.400V4H-6L-2-3h-2Z" fill="#fff" />}
      {glyph === 'bridge' && (
        <path d="M-5-6V6M5-6V6M-1-3v5M2-3v5M-7 2H7M-7 6h4M3 6h4M-5-2c3 4 7 4 10 0" fill="none" stroke="#fff" strokeWidth="1.700" />
      )}
    </g>
  )
}

const PINS: [string, number, number, string, string][] = [
  ['a', 351, 143, '#ab68f2', 'flower'],
  ['a', 998, 97, '#ab68f2', 'museum'],
  ['a', 1224, 671, '#4495f7', 'cart'],
  ['a', 398, 0, '#4495f7', 'cart'],
  ['b', 651, 910, '#ab68f2', 'museum'],
  ['b', 245, 1080, '#ab68f2', 'mask'],
  ['c', 510, 748, '#7c909c', 'bridge'],
  ['d', 1133, 443, '#ab68f2', 'museum'],
  ['d', 745, 741, '#4da677', 'tree'],
  ['d', 961, 879, '#4da677', 'tree'],
  ['d', 1110, 848, '#4495f7', 'bag'],
  ['d', 588, 1243, '#ab68f2', 'museum'],
]

// Tip positions of the places of interest.
const PLACES: [number, number][] = [
  [523, 374],
  [633, 449],
  [725, 446],
  [464, 489],
  [552, 476],
  [522, 501],
]

function Place({ x, y }: { x: number; y: number }) {
  return (
    <g transform={`translate(${x} ${y})`}>
      <path d="M0-2C-4-12-19.500-18-19.500-32a19.500 19.500 0 0 1 39 0C19.500-18 4-12 0-2Z" fill="#cc716e" stroke="#0a0a0a" strokeWidth="3" strokeLinejoin="round" />
      <circle cy="-32" r="14.500" fill="#f8e7bd" stroke="#0a0a0a" strokeWidth="2.500" />
      <rect x="-5.500" y="-41" width="11" height="20" fill="#c9ccd6" stroke="#0a0a0a" strokeWidth="2" />
      <path d="M-12-29h5v8h-4Z M12-29h-5v8h4Z" fill="#c9ccd6" stroke="#0a0a0a" strokeWidth="2" />
      <path d="M-2.500-38.500v11M2.500-38.500v11" stroke="#0a0a0a" strokeWidth="2" strokeDasharray="2.600 1.800" />
      <path d="M-2-21v-4h4v4" fill="#0a0a0a" />
    </g>
  )
}

function LondonMap() {
  return (
    <svg viewBox="0 0 1143 900" preserveAspectRatio="xMidYMid slice" role="img" aria-label="Map of London" className="block h-full w-full">
      <rect width="1143" height="900" fill="#f8f7f7" />
      {CREAM.map((s, i) => <path key={i} d={polygon(s)} fill="#f8f0df" />)}
      {PINK.map((s, i) => <path key={i} d={polygon(s)} fill="#fbe7e4" />)}
      <g fill="#cdefd9" stroke="#cdefd9" strokeWidth="3" strokeLinejoin="round">
        {PARKS.map((s, i) => <path key={i} d={polygon(s)} />)}
      </g>
      <path d="M381 300q-13-36 12-54q42-20 52 8v60" fill="none" stroke="#d5e3e4" strokeWidth="3" />
      <g fill="none" stroke="#dadbde">
        {RAIL.map((s, i) => <path key={i} d={smooth(s)} strokeWidth="2" />)}
        {RAIL.map((s, i) => <path key={i} d={smooth(s)} strokeWidth="6" strokeDasharray="1 11" />)}
      </g>
      <g fill="#dcdde0" stroke="#dcdde0" strokeWidth="3" strokeLinejoin="round">
        <path d={polygon('a 350,205 380,220 450,290 485,360 455,335')} />
        <path d={polygon('a 20,410 60,425 60,470 20,450')} />
        <path d={polygon('a 95,1045 190,1010 290,1035 360,1040 120,1075')} />
        <path d={polygon('a 60,865 150,905 235,940 150,915')} />
        <path d={polygon('c 900,870 960,850 1120,720 1150,735 1000,830 930,890')} />
        <path d={polygon('b 910,305 1000,370 1080,450 990,390')} />
        <path d={polygon('b 1240,840 1265,900 1250,920 1235,880')} />
        <path d={polygon('d 1240,1130 1300,1130 1275,1160 1350,1310 1300,1280')} />
        <path d={polygon('d 775,500 785,500 785,570 775,570')} />
      </g>
      <g fill="none" stroke="#a3d9ed" strokeLinecap="round" strokeLinejoin="round">
        <path d={smooth(THAMES_WEST)} strokeWidth="12" />
        <path d={smooth('c 350,450 375,560 400,670 460,760 560,830 690,870 790,850 850,760 880,680 885,610 940,540 1100,505 1200,470 1330,490 1420,440 1470,350 1490,220 1492,120 1500,20')} strokeWidth="15" />
        <path d={smooth(THAMES_EAST)} strokeWidth="17" />
        <path d={smooth('d 920,80 920,180 920,280 970,380 1060,450 1150,460 1210,380 1230,290 1190,180 1190,100 1250,50 1320,70 1370,150 1430,220 1560,245')} strokeWidth="20" />
        {STREAMS.map((s, i) => <path key={i} d={smooth(s)} strokeWidth="2" />)}
      </g>
      {WATER.map((s, i) => <path key={i} d={polygon(s)} fill="#a3d9ed" />)}
      <path d={smooth(THAMES_EAST)} fill="none" stroke="#7cc3dc" strokeWidth="1" strokeDasharray="10 5" />
      <g fill="none" stroke="#d5dee8" strokeLinejoin="round">
        {MINOR.map((s, i) => <path key={i} d={smooth(s)} strokeWidth={i % 3 === 0 ? 4 : i % 3 === 1 ? 3 : 2} />)}
      </g>
      <g fill="none" stroke="#8f9cc5" strokeWidth="5" strokeLinejoin="round">
        {MAJOR.map((s, i) => <path key={i} d={smooth(s)} />)}
      </g>
      <g fill="none" stroke="#b1bddb" strokeWidth="3" strokeLinejoin="round">
        {MAJOR.map((s, i) => <path key={i} d={smooth(s)} />)}
      </g>
      {PINS.map(([t, px, py, color, glyph], i) => {
        const [x, y] = project(t, px, py)
        return <Pin key={i} x={x} y={y} color={color} glyph={glyph} />
      })}
      <g className="font-[Roboto,sans-serif]" stroke="#fff" strokeWidth="3" strokeLinejoin="round" paintOrder="stroke" dominantBaseline="central">
        {LABELS.map(([text, t, px, py, kind, turn = 0, anchor = 'middle'], i) => {
          const [x, y] = project(t, px, py)
          return (
            <text
              key={i}
              x={x}
              y={y}
              textAnchor={anchor}
              className={KIND[kind]}
              stroke={kind === 'river' ? 'none' : undefined}
              transform={turn ? `rotate(${turn} ${x} ${y})` : undefined}
            >
              {text}
            </text>
          )
        })}
      </g>
      {PLACES.map(([x, y]) => <Place key={x} x={x} y={y} />)}
    </svg>
  )
}

function PlacesOfInterest() {
  return (
    <section>
      <h2 className="border border-[#1e4157] bg-[#1e4157] pt-[17px] pb-[19px] text-center text-[42px] leading-[46px] font-bold text-[#efefef]">
        Places of Interest
      </h2>
      <div className="relative h-[900px] overflow-hidden">
        <LondonMap />
        <a
          href="#google"
          className="absolute bottom-[4px] left-[17px] font-[Lato,sans-serif] text-[34px] leading-[42px] font-medium [text-shadow:0_0_3px_#fff,0_0_3px_#fff]"
        >
          <span className="text-[#4a84ee]">G</span>
          <span className="text-[#dd4b3e]">o</span>
          <span className="text-[#f2b33a]">o</span>
          <span className="text-[#4a84ee]">g</span>
          <span className="text-[#4fa65a]">l</span>
          <span className="text-[#dd4b3e]">e</span>
        </a>
        <div className="absolute right-0 bottom-0 flex h-[24px] items-center gap-[22px] bg-[#f5f5f5]/80 pr-[11px] pl-[6px] font-[Roboto,sans-serif] text-[18px] text-black">
          <button>Keyboard shortcuts</button>
          <span>Map data ©2024 Google</span>
          <a href="#terms">Terms</a>
          <a href="#report">Report a map error</a>
        </div>
      </div>
    </section>
  )
}

/* ------------------------------------------------------------------ */
/* City details                                                        */
/* ------------------------------------------------------------------ */

function Section({ title }: { title: string }) {
  return (
    <tr>
      <th colSpan={2} className="border border-[#1e4157] bg-[#1e4157] pt-[17px] pb-[19px] text-center text-[42px] leading-[46px] font-bold text-[#efefef]">
        {title}
      </th>
    </tr>
  )
}

function Row({ label, children }: { label: string; children: React.ReactNode }) {
  return (
    <tr>
      <th scope="row" className="border border-[#1e4157] px-[18px] py-[18px] text-left text-[31px] leading-[34px] font-bold">
        {label}
      </th>
      <td className="border border-[#1e4157] px-[18px] py-[18px]">{children}</td>
    </tr>
  )
}

function CityTable() {
  return (
    <table className="w-full table-fixed border-collapse self-start text-[30px] leading-[34px]">
      <colgroup>
        <col className="w-[255px]" />
        <col />
      </colgroup>
      <tbody>
        <Section title="Country" />
        <Row label="Country Name:">United Kingdom</Row>
        <Section title="City Details" />
        <Row label="Population:">8900000</Row>
        <Row label="Geo Location:">51.5074°, 0.1278°</Row>
        <Row label="Currency:">GBP</Row>
        <Row label="Timezone:">GMT</Row>
        <Row label="Area:">
          <span className="block pt-1.5">
            1572 km<sup className="text-[22px]">2</sup>
          </span>
        </Row>
        <Row label="Official Language:">English</Row>
        <Section title="Current Weather" />
        <Row label="Temperature:">18.55°C</Row>
        <Row label="Weather:">Overcast clouds</Row>
        <Row label="Humidity:">92%</Row>
        <Row label="Wind Speed:">2.06 m/s</Row>
        <Section title="Forecast" />
        <tr className="text-[26px] leading-[30px]">
          <th scope="row" className="border border-[#1e4157] px-[18px] py-[18px] text-left font-bold">
            06-Sep-2024
          </th>
          <td className="border border-[#1e4157] px-[18px] py-[18px]">
            <b>Temp:</b> 18.54, <b>Conditions:</b> Rain,
            <br />
            <b>Humidity:</b> 92, <b>Wind Speed:</b> 2.48
          </td>
        </tr>
        <tr className="h-24">
          <td className="border border-[#1e4157]" />
          <td className="border border-[#1e4157]" />
        </tr>
      </tbody>
    </table>
  )
}

export default function App() {
  return (
    <div className="flex h-screen flex-col overflow-hidden bg-[#efefef] font-[Inter,sans-serif]">
      <header>
        <TabStrip />
        <Toolbar />
      </header>
      <div className="min-h-0 flex-1 overflow-hidden font-[Lato,sans-serif] text-[#1e4157]">
        <nav className="flex h-[124px] items-start justify-center gap-[18px] bg-[#1e4157] pt-[23px] text-[30px] leading-[34px] font-medium">
          <a href="?city=1" className="rounded-full border border-[#efefef] px-[38px] pt-[14px] pb-[15px] text-[#efefef]">
            London
          </a>
          <a href="?city=2" className="rounded-full border border-[#efefef] bg-[#efefef] px-[38px] pt-[14px] pb-[15px]">
            New York City
          </a>
          <a href="rss.php" className="rounded-full border border-[#efefef] bg-[#efefef] px-[38px] pt-[14px] pb-[15px]">
            RSS Feed
          </a>
        </nav>
        <main className="mx-auto max-w-[1980px]">
          <h1 className="pt-[103px] text-center text-[70px] leading-[80px] font-black">London</h1>
          <div className="mt-[55px] grid grid-cols-[747fr_1143fr] items-start gap-[90px]">
            <CityTable />
            <PlacesOfInterest />
          </div>
        </main>
      </div>
    </div>
  )
}
